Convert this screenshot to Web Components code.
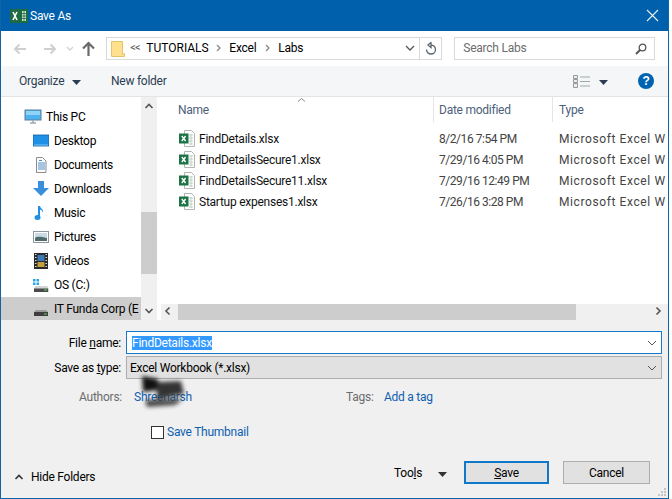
<!DOCTYPE html>
<html><head><meta charset="utf-8"><style>
html,body{margin:0;background:#fff}
body{font:12px/16px Roboto,"Liberation Sans",sans-serif;color:#000;letter-spacing:-.25px}
svg{display:block}
</style></head><body>
<save-dialog>
  <title-bar>
    <svg slot="icon" width="18" height="14" viewBox="0 0 18 14"><rect width="18" height="14" fill="#1e6b41"/><rect x="12" y="2" width="4" height="10" fill="#cfe3d6"/><path d="M12 4.500h4M12 7h4M12 9.500h4M14 2v10" stroke="#1e6b41" stroke-width=".8"/><path d="M3 3l4 8M7 3l-4 8" stroke="#fff" stroke-width="1.600"/></svg>
    Save As
  </title-bar>
  <address-bar></address-bar>
  <command-bar></command-bar>
  <main-area>
    <nav-pane>
      <nav-item top><svg slot="icon" width="18" height="16" viewBox="0 0 18 16"><rect x="1" y="1" width="16" height="10" fill="#4db2ef" stroke="#5a7f9c"/><path d="M2 2h14v4H2z" fill="#8ed4f8"/><path d="M6 14h6M9 11v3" stroke="#9aa9b5" stroke-width="1.500"/></svg>This PC</nav-item>
      <nav-item><svg slot="icon" width="16" height="16" viewBox="0 0 16 16"><rect x="0" y="2" width="16" height="11" fill="#1e90e6" stroke="#0e5f9f" stroke-width=".8"/><path d="M1 12h14" stroke="#7cc6f6"/></svg>Desktop</nav-item>
      <nav-item><svg slot="icon" width="16" height="16" viewBox="0 0 16 16"><path d="M3.500.500h6l3.500 3.500v11.500h-9.500z" fill="#fbfbfb" stroke="#8d8d8d"/><path d="M5 6h7M5 8h7M5 10h7M5 12h7" stroke="#4d90c8"/><path d="M6 3.500h3" stroke="#4d90c8"/></svg>Documents</nav-item>
      <nav-item><svg slot="icon" width="16" height="16" viewBox="0 0 16 16"><path d="M5 0h6v7h5l-8 8-8-8h5z" fill="#3a8fdc"/></svg>Downloads</nav-item>
      <nav-item><svg slot="icon" width="16" height="16" viewBox="0 0 16 16"><path d="M6 1v10.500" stroke="#1f8fe6" stroke-width="2"/><ellipse cx="4.500" cy="12.500" rx="3" ry="2.500" fill="#1f8fe6"/><path d="M7 1c.5 3 4 3.500 3 7-.2-2-1.500-3-3-3.500z" fill="#1f8fe6"/></svg>Music</nav-item>
      <nav-item><svg slot="icon" width="16" height="16" viewBox="0 0 16 16"><rect x=".5" y="2.500" width="15" height="11" fill="#fff" stroke="#8e979f"/><rect x="2" y="4" width="12" height="8" fill="#c8dbe6"/><path d="M2 9c3-2 6-1 12 0v3H2z" fill="#4f6a6b"/></svg>Pictures</nav-item>
      <nav-item><svg slot="icon" width="16" height="16" viewBox="0 0 16 16"><rect x="1" y="0" width="14" height="16" fill="#2a2a2a"/><path d="M2 1.500h1.500M2 4.500h1.500M2 7.500h1.500M2 10.500h1.500M2 13.500h1.500M12.500 1.500H14M12.500 4.500H14M12.500 7.500H14M12.500 10.500H14M12.500 13.500H14" stroke="#ddd" stroke-width="1.200"/><rect x="4.500" y="2" width="7" height="6" fill="#3b78b8"/><rect x="4.500" y="9" width="7" height="5" fill="#c2a03c"/></svg>Videos</nav-item>
      <nav-item><svg slot="icon" width="16" height="16" viewBox="0 0 16 16"><path d="M0 2h2.500v2.500H0zM3.500 2H6v2.500H3.500zM0 5.500h2.500V8H0zM3.500 5.500H6V8H3.500z" fill="#25a6e6"/><path d="M2 9h12l2 2.500V15H1v-3.500z" fill="#d4d4d4"/><rect x="1" y="11.500" width="14" height="3.500" fill="#4a4a4a"/><path d="M11 13h3" stroke="#4ee04e"/></svg>OS (C:)</nav-item>
      <nav-item sel><svg slot="icon" width="16" height="16" viewBox="0 0 16 16"><path d="M3 9h10l2 2H1z" fill="#9a9a9a"/><rect x="1" y="11" width="14" height="4" fill="#3e3e3e"/><path d="M11 13h3" stroke="#58d558"/></svg>IT Funda Corp (E</nav-item>
    </nav-pane>
    <v-scroll></v-scroll>
    <file-pane>
      <file-row name="FindDetails.xlsx" date="8/2/16 7:54 PM"></file-row>
      <file-row name="FindDetailsSecure1.xlsx" date="7/29/16 4:05 PM"></file-row>
      <file-row name="FindDetailsSecure11.xlsx" date="7/29/16 12:49 PM"></file-row>
      <file-row name="Startup expenses1.xlsx" date="7/26/16 3:28 PM"></file-row>
    </file-pane>
  </main-area>
  <form-area></form-area>
</save-dialog>
<script>
const def=(n,h)=>customElements.define(n,class extends HTMLElement{constructor(){super();this.attachShadow({mode:'open'}).innerHTML=h}});
const chev=(d,c='#6d6d6d',w=1.6)=>`<svg width="10" height="10" viewBox="0 0 10 10"><path d="${d}" fill="none" stroke="${c}" stroke-width="${w}"/></svg>`;
const caret=(c='#1f2a38')=>`<svg width="9" height="5" viewBox="0 0 9 5"><path d="M0 0h9L4.500 5z" fill="${c}"/></svg>`;

def('save-dialog',`<style>:host{display:flex;flex-direction:column;width:669px;height:499px;box-sizing:border-box;border:1px solid #0f63a8;border-top:0;background:#f0f0f0;overflow:hidden}</style><slot></slot>`);

def('title-bar',`<style>:host{display:flex;align-items:center;height:31px;background:#0060ac;color:#fff;padding:0 9px;flex:none}
.i{width:20px}.t{flex:1}.x{width:13px;height:13px}</style>
<span class="i"><slot name="icon"></slot></span><span class="t"><slot></slot></span>
<svg class="x" viewBox="0 0 13 13"><path d="M1 1l11 11M12 1L1 12" stroke="#e8f1f8" stroke-width="1.100"/></svg>`);

def('address-bar',`<style>:host{display:flex;align-items:center;height:35px;background:#fff;flex:none;padding:0 13px 0 12px;box-sizing:border-box}
.nav{display:flex;align-items:center;width:94px}
.box{display:flex;align-items:center;box-sizing:border-box;height:23px;border:1px solid #d9d9d9;width:336px;margin-right:12px;flex:none;padding-left:4px}
.sep{margin:0 10px 0 8px;width:5px}
.sp{flex:1}.r{width:21px;height:21px;border-left:1px solid #d9d9d9;display:flex;align-items:center;justify-content:center}
.dd{margin-right:4px}.w{flex:none;margin-bottom:2px}
.s{display:flex;align-items:center;box-sizing:border-box;height:23px;width:202px;border:1px solid #d9d9d9;padding:0 7px 0 8px;color:#6d6d6d}.s span{flex:1;margin-bottom:2px}
</style>
<div class="nav">
<svg width="14" height="12" viewBox="0 0 14 12" style="margin-right:16px"><path d="M13 6H2M6.500 1.500L2 6l4.500 4.500" fill="none" stroke="#cfcfcf" stroke-width="2"/></svg>
<svg width="14" height="12" viewBox="0 0 14 12" style="margin-right:9px"><path d="M1 6h11M7.500 1.500L12 6l-4.500 4.500" fill="none" stroke="#cfcfcf" stroke-width="2"/></svg>
<svg width="8" height="6" viewBox="0 0 8 6" style="margin-right:8px"><path d="M1 1l3 3 3-3" fill="none" stroke="#d4d4d4" stroke-width="1.400"/></svg>
<svg width="13" height="15" viewBox="0 0 13 15"><path d="M6.500 15V2M1 7.500l5.500-5.500L12 7.500" fill="none" stroke="#6a6a6a" stroke-width="2.200"/></svg>
</div>
<div class="box">
<svg width="14" height="16" viewBox="0 0 14 16" style="flex:none"><path d="M.5.500h11v13l2-1v3H.5z" fill="#ffe08c" stroke="#e5c469"/></svg>
<span class="w" style="color:#666;font-size:11px;letter-spacing:-1px;margin-left:5px;width:10px">&lt;&lt;</span>
<span class="w" style="margin-left:6px;width:60px;letter-spacing:0">TUTORIALS</span><span class="sep">${chev('M3 2l3 3-3 3','#888',1.300)}</span><span class="w" style="width:26px">Excel</span><span class="sep">${chev('M3 2l3 3-3 3','#888',1.300)}</span><span class="w">Labs</span>
<span class="sp"></span><span class="dd">${chev('M1 3l4 4 4-4','#555',1.300)}</span>
<span class="r"><svg width="12" height="13" viewBox="0 0 12 13"><path d="M6 3a4.500 4.500 0 1 1-4.500 4.500M6 0.500v5L3 3z" fill="none" stroke="#5c6670" stroke-width="1.300"/></svg></span>
</div>
<div class="s"><span>Search Labs</span><svg width="12" height="12" viewBox="0 0 12 12"><circle cx="7.500" cy="4.500" r="3.300" fill="none" stroke="#555" stroke-width="1.300"/><path d="M5 7l-4 4" stroke="#555" stroke-width="2"/></svg></div>`);

def('command-bar',`<style>:host{display:flex;align-items:center;height:31px;box-sizing:border-box;background:#f5f6f7;border-bottom:1px solid #e4e4e4;flex:none;padding:0 14px 0 18px;color:#2b3d52}
.o{width:48px}.c{margin:0 0 0 5px}.n{margin-left:30px}.sp{flex:1}.v{margin-right:9px}.cv{margin-right:30px}
.h{width:16px;height:16px;border-radius:50%;background:#0063b1;color:#fff;font:bold 12px/16px "Liberation Sans",sans-serif;text-align:center}
</style><span class="o">Organize</span><span class="c">${caret('#2b3d52')}</span><span class="n">New folder</span><span class="sp"></span>
<svg class="v" width="17" height="13" viewBox="0 0 17 13"><path d="M.5.500h4v3h-4zM.5 4.500h4v3h-4zM.5 8.500h4v4h-4z" fill="#eee" stroke="#999"/><path d="M7 2h10M7 6.500h10M7 11h10" stroke="#9aa" stroke-width="1.200"/></svg>
<span class="cv">${caret('#2b3d52')}</span><span class="h">?</span>`);

def('main-area',`<style>:host{display:flex;height:223px;flex:none;background:#fff}</style><slot></slot>`);

def('nav-pane',`<style>:host{display:block;width:140px;height:223px;box-sizing:border-box;padding-top:8px;background:#fff;overflow:hidden;flex:none}</style><slot></slot>`);

def('nav-item',`<style>:host{display:flex;align-items:center;height:24px;padding-left:32px;white-space:nowrap;overflow:hidden}
:host([top]){padding-left:23px}:host([sel]){background:#cdcdcd}
.i{width:21px;flex:none}:host([top]) .i{width:22px}</style><span class="i"><slot name="icon"></slot></span><slot></slot>`);

def('v-scroll',`<style>:host{display:flex;flex-direction:column;align-items:center;width:16px;background:#f0f0f0;flex:none;margin-right:2px;box-sizing:border-box;padding-top:4px}
.t{width:100%;height:62px;background:#cdcdcd;margin-top:101px}.s{flex:1}</style>
${chev('M1.500 7L5 3.500 8.500 7','#555')}<div class="t"></div><div class="s"></div>${chev('M1.500 3L5 6.500 8.500 3','#555')}<div style="height:4px"></div>`);

def('file-pane',`<style>:host{display:flex;flex-direction:column;flex:1;min-width:0;position:relative}
.h{display:grid;grid-template-columns:274px 119px 1fr;height:25px;color:#4c607a;flex:none}
.h span{padding:5px 0 0 5px;border-left:1px solid #e5e5e5}.h span:first-child{border:0;padding-left:19px}
.h span:last-child{padding-left:6px}
.a{position:absolute;left:138px;top:0}
.l{flex:1;padding-top:6px}
.hs{display:flex;align-items:center;height:16px;background:#f0f0f0;margin-left:2px;flex:none}
.t{height:16px;width:398px;background:#cdcdcd}.g{flex:1}
</style><div class="h"><span>Name</span><span>Date modified</span><span>Type</span></div>
<svg class="a" width="9" height="5" viewBox="0 0 9 5"><path d="M1 4.500l3.500-3 3.500 3" fill="none" stroke="#8a8a8a"/></svg>
<div class="l"><slot></slot></div>
<div class="hs"><span style="margin-left:2px">${chev('M6.500 1.500L3 5l3.500 3.500','#555')}</span><div class="t" style="margin-left:5px"></div><div class="g"></div><span style="margin-right:5px">${chev('M3.500 1.500L7 5 3.500 8.500','#555')}</span></div>`);

customElements.define('file-row',class extends HTMLElement{constructor(){super();this.attachShadow({mode:'open'}).innerHTML=`<style>:host{display:grid;grid-template-columns:274px 120px 1fr;height:21px;align-items:center;white-space:nowrap;color:#222}
.n{display:flex;align-items:center;padding-left:20px;color:#111}svg{margin-right:4px;flex:none}.d,.y{color:#444}.d{padding-left:6px;letter-spacing:-.45px}.y{padding-left:6px;letter-spacing:.6px}</style>
<div class="n"><svg width="16" height="17" viewBox="0 0 16 17"><path d="M5.500.500h7l3 3v13h-10z" fill="#fff" stroke="#aeb6b0"/><path d="M10 5h4M10 8h4M10 11h4M10 14h4M12 4v11" stroke="#b9cdbf" stroke-width=".9"/><rect x="0" y="3.500" width="9.500" height="10" fill="#1c7345"/><path d="M2.800 6l3.800 5M6.600 6l-3.800 5" stroke="#fff" stroke-width="1.400"/></svg><span></span></div><div class="d"></div><div class="y">Microsoft Excel W</div>`;
const s=this.shadowRoot;s.querySelector('.n span').textContent=this.getAttribute('name');s.querySelector('.d').textContent=this.getAttribute('date');}});

def('form-area',`<style>:host{display:block;flex:1;position:relative;background:#f0f0f0;padding-top:11px}
.r{display:flex;align-items:center;margin-bottom:2px;height:23px}
.lb{width:120px;text-align:right;margin-right:5px;flex:none}
.f{box-sizing:border-box;height:23px;width:536px;display:flex;align-items:center;flex:none}
.in{background:#fff;border:1px solid #1979ca;padding:0 4px 0 5px}
.sel{background:#e1e1e1;border:1px solid #adadad;padding:0 4px 0 3px}
.sp{flex:1}.hl{background:#3399ff;color:#fff;line-height:14px}
.m{display:flex;height:16px;margin-top:10px}
.au{color:#6d6d6d;width:121px;text-align:right;margin-right:12px;flex:none}
a{color:#0f5fb0;text-decoration:none}.auth{width:212px;flex:none}.ta{color:#6d6d6d;width:38px;flex:none}
.cb{display:flex;align-items:center;margin:19px 0 0 150px}.b{width:13px;height:13px;box-sizing:border-box;border:1px solid #333;background:#fff;margin-right:3px}
.ft{display:flex;align-items:center;height:23px;margin-top:21px}
.hf{margin:8px 0 0 13px;display:flex;align-items:center;gap:3px}
.gr{flex:1}
button{font:inherit;letter-spacing:inherit;color:#000;box-sizing:border-box;height:23px;background:#e1e1e1;border:1px solid #adadad;padding:0;flex:none}
.save{width:85px;border:2px solid #0f78c8;margin:0 14px 0 0}.cancel{width:87px;margin-right:18px}
.tl{width:28px;margin-right:16px}.tc{margin-right:17px}
.blob{position:absolute;left:132px;top:50px;filter:blur(2.200px);pointer-events:none}
.grip{position:absolute;right:2px;bottom:2px}
</style>
<div class="r"><span class="lb">File <u>n</u>ame:</span><div class="f in"><span class="hl">FindDetails.xlsx</span><span class="sp"></span>${chev('M1 3l4 4 4-4','#555',1)}</div></div>
<div class="r"><span class="lb">Save as <u>t</u>ype:</span><div class="f sel"><span>Excel Workbook (*.xlsx)</span><span class="sp"></span>${chev('M1 3l4 4 4-4','#555',1)}</div></div>
<div class="m"><span class="au">Authors:</span><a class="auth">Shreeharsh</a><span class="ta">Tags:</span><a>Add a tag</a></div>
<svg class="blob" width="60" height="42" viewBox="0 0 60 42"><path d="M9 6l16 3 0 11-15 2z" fill="#111"/><path d="M24 12l24 -1 3 13-27 5z" fill="#333"/><path d="M12 30l38-1-8 6-28 2z" fill="#444"/></svg>
<div class="cb"><span class="b"></span><a>Save Thumbnail</a></div>
<div class="ft"><div class="hf">${chev('M1.500 7L5 3.500 8.500 7','#333')}<span style="margin-left:4px">Hide Folders</span></div><span class="gr"></span>
<span class="tl">Too<u>l</u>s</span><span class="tc">${caret('#333')}</span><button class="save"><u>S</u>ave</button><button class="cancel">Cancel</button></div>
<svg class="grip" width="9" height="9" viewBox="0 0 9 9"><path d="M7 1h2v2H7zM4 4h2v2H4zM7 4h2v2H7zM1 7h2v2H1zM4 7h2v2H4zM7 7h2v2H7z" fill="#c4c4c4"/></svg>`);
</script>
</body></html>
